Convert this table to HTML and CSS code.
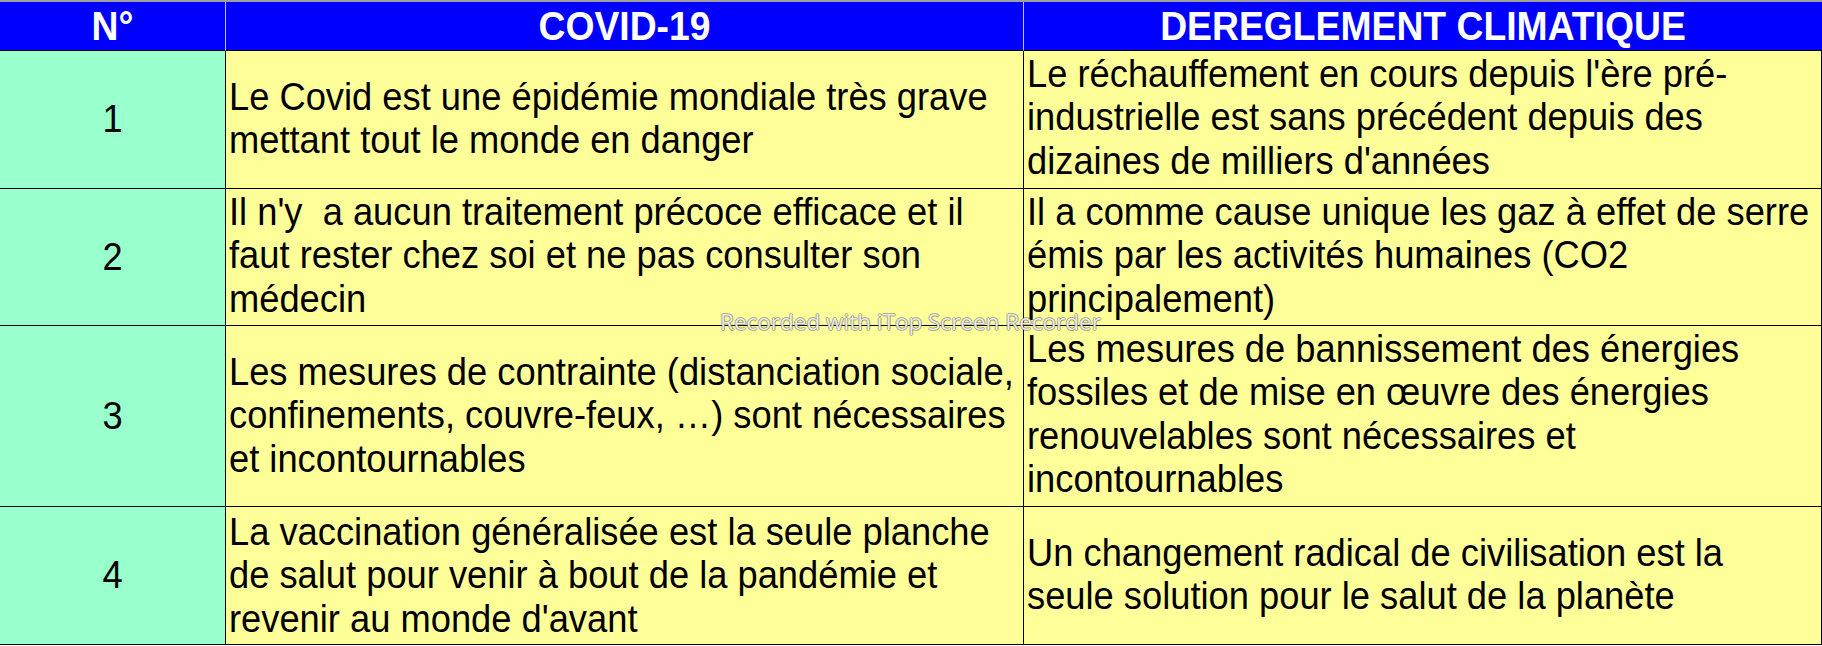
FILE: index.html
```html
<!DOCTYPE html>
<html lang="fr">
<head>
<meta charset="utf-8">
<title>Covid / Dérèglement climatique</title>
<link rel="stylesheet" href="styles.css">
</head>
<body>
<div class="page">
  <div class="topline"></div>
  <div class="table">
    <div class="cell head c1"><span class="hl">N°</span></div>
    <div class="cell head c2"><span class="hl">COVID-19</span></div>
    <div class="cell head c3"><span class="hl">DEREGLEMENT CLIMATIQUE</span></div>

    <div class="cell num"><span class="tx">1</span></div>
    <div class="cell txt mid"><div class="tx">Le Covid est une épidémie mondiale très grave mettant tout le monde en danger</div></div>
    <div class="cell txt top"><div class="tx">Le réchauffement en cours depuis l'ère pré-industrielle est sans précédent depuis des dizaines de milliers d'années</div></div>

    <div class="cell num"><span class="tx">2</span></div>
    <div class="cell txt top"><div class="tx">Il n'y&nbsp; a aucun traitement précoce efficace et il faut rester chez soi et ne pas consulter son médecin</div></div>
    <div class="cell txt top"><div class="tx">Il a comme cause unique les gaz à effet de serre émis par les activités humaines (CO2 principalement)</div></div>

    <div class="cell num"><span class="tx">3</span></div>
    <div class="cell txt mid"><div class="tx">Les mesures de contrainte (distanciation sociale, confinements, couvre-feux, …) sont nécessaires et incontournables</div></div>
    <div class="cell txt top"><div class="tx">Les mesures de bannissement des énergies fossiles et de mise en œuvre des énergies renouvelables sont nécessaires et incontournables</div></div>

    <div class="cell num"><span class="tx">4</span></div>
    <div class="cell txt mid"><div class="tx">La vaccination généralisée est la seule planche de salut pour venir à bout de la pandémie et revenir au monde d'avant</div></div>
    <div class="cell txt mid"><div class="tx">Un changement radical de civilisation est la seule solution pour le salut de la planète</div></div>
  </div>
  <div class="watermark">Recorded with iTop Screen Recorder</div>
</div>
</body>
</html>
```

FILE: styles.css
```css
html, body {
  margin: 0;
  padding: 0;
  background: #ffffff;
}

.page {
  position: relative;
  width: 1822px;
  height: 646px;
  overflow: hidden;
  font-family: "Liberation Sans", Arial, sans-serif;
}

.topline {
  height: 2px;
  background: #a0a0a0;
}

.table {
  display: grid;
  grid-template-columns: 226px 798px 798px;
  grid-template-rows: 49px 138px 137px 181px 138px;
}

.cell {
  box-sizing: border-box;
  border-right: 1px solid #000000;
  border-bottom: 1px solid #000000;
  font-size: 36.3px;
  line-height: 40.4px;
  color: #000000;
}

.head {
  background: #0000ff;
  color: #ffffff;
  font-weight: bold;
  font-size: 37.3px;
  line-height: 48px;
  text-align: center;
  border-right: 1px solid #c4c4d8;
}

.head.c3 {
  border-right: none;
}

.hl {
  display: inline-block;
  transform: scaleY(1.08);
}

.num {
  background: #99ffcc;
  display: flex;
  align-items: center;
  justify-content: center;
}

.num .tx {
  display: inline-block;
  transform: scaleY(1.07);
}

.txt {
  background: #ffff99;
  padding: 0 7px 0 3px;
  display: flex;
}

.txt .tx {
  transform: scaleY(1.07);
}

.txt.mid {
  align-items: center;
}

.txt.top {
  align-items: flex-start;
  padding-top: 2px;
}

.txt.top .tx {
  transform-origin: top left;
}

.watermark {
  position: absolute;
  left: 720px;
  top: 307px;
  font-family: "Open Sans", "Noto Sans", sans-serif;
  font-size: 22.5px;
  line-height: 30px;
  color: rgba(255, 255, 255, 0.85);
  text-shadow: 1px 0 0 rgba(110, 110, 110, 0.55), -1px 0 0 rgba(110, 110, 110, 0.55), 0 1px 0 rgba(110, 110, 110, 0.55), 0 -1px 0 rgba(110, 110, 110, 0.55);
  white-space: nowrap;
  pointer-events: none;
}
```
